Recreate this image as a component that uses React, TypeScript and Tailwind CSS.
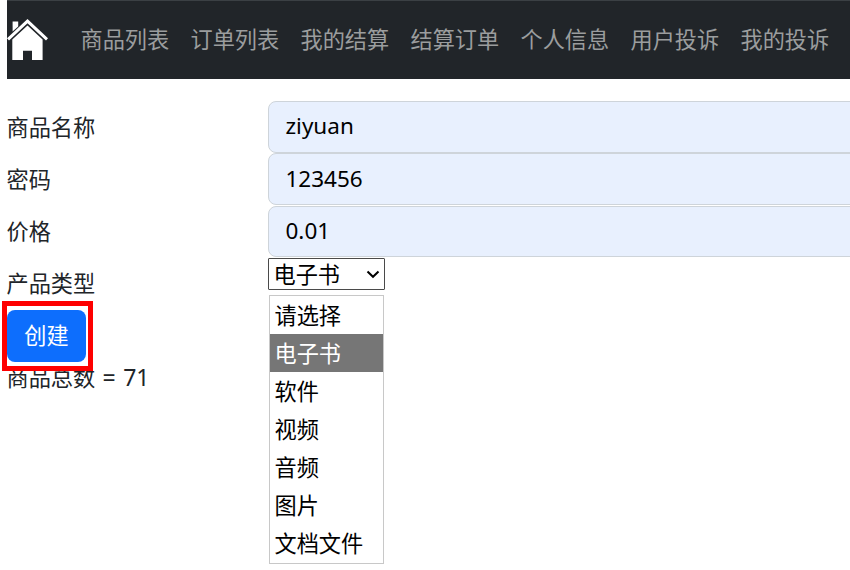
const navItems = ['商品列表', '订单列表', '我的结算', '结算订单', '个人信息', '用户投诉', '我的投诉'];
const options = ['请选择', '电子书', '软件', '视频', '音频', '图片', '文档文件'];
const fields = [
  { label: '商品名称', value: 'ziyuan', box: 'h-[52px] pt-[8px]' },
  { label: '密码', value: '123456', box: 'h-[52px] pt-[9px]' },
  { label: '价格', value: '0.01', box: 'mt-px h-[51px] pt-[8px]' },
];

function HomeIcon() {
  return (
    <svg className="mb-px block h-[41px] w-[41px] shrink-0" viewBox="0 0 41 41" fill="#fff" aria-hidden="true">
      <path d="M5.6 2.6H11.2V7.4L5.6 12.6Z" />
      <path d="M0 19.3L20.5 0L41 19.3L39 21.5L20.5 4.2L2 21.5Z" />
      <path d="M5.3 20.6L20.5 6.6L35.6 20.6V41H25V31.7H16V41H5.3Z" />
    </svg>
  );
}

function Navbar() {
  return (
    <nav className="ml-[7px] flex h-[79px] items-center border-t border-[#3b4044] bg-[#212529]">
      <HomeIcon />
      <ul className="mb-[4px] ml-[32.5px] flex gap-[22px]">
        {navItems.map((item) => (
          <li key={item} className="w-[88px] whitespace-nowrap text-[22.2px] text-[#9b9d9e]">{item}</li>
        ))}
      </ul>
    </nav>
  );
}

export default function App() {
  return (
    <div className="h-[570px] w-[850px] overflow-hidden bg-white font-['Noto_Sans_CJK_SC',sans-serif] text-[22.2px] leading-[32px] text-[#212529]">
      <Navbar />
      <main className="ml-[6.5px] mt-[22px]">
        {fields.map((field) => (
          <div key={field.label} className="flex">
            <label className="w-[261.5px] shrink-0 pt-[9px]">{field.label}</label>
            <div className={`${field.box} w-[600px] shrink-0 rounded-[8px] border border-[#ced4da] bg-[#e8f0fe] pl-[16.5px] font-['Noto_Sans',sans-serif] text-[22.5px] text-black`}>
              {field.value}
            </div>
          </div>
        ))}
        <div className="flex h-[53px]">
          <div className="w-[261.5px] shrink-0 pt-[9px]">产品类型</div>
          <div className="relative mt-px h-[32px] w-[117px]">
            <div className="flex h-full items-center justify-between rounded-[1px] border border-[#4a4a4a] bg-white pl-[4.5px] pr-[4px] text-black">
              <span className="pb-[3px]">电子书</span>
              <svg className="h-[14px] w-[14px]" viewBox="0 0 14 14" fill="none" stroke="#000" strokeWidth="2" aria-hidden="true">
                <path d="M1.5 4.5L7 9.8L12.5 4.5" />
              </svg>
            </div>
            <ul className="absolute left-px top-[37px] w-[115px] border border-[#c8c8c8] bg-white pb-px text-black">
              {options.map((option) => (
                <li
                  key={option}
                  className={`h-[38px] pl-[4.5px] pt-[2px] ${option === '电子书' ? 'bg-[#767676] text-white' : ''}`}
                >
                  {option}
                </li>
              ))}
            </ul>
          </div>
        </div>
        <div className="relative ml-[0.5px] h-[52px] w-[79px]">
          <button className="block h-full w-full rounded-[8px] bg-[#0d6efd] pb-[4px] text-white">创建</button>
          <div className="absolute -left-[5px] -top-[9px] h-[70px] w-[91px] border-[5px] border-[#fe0000]" />
        </div>
        <p className="-mt-[2px] flex">
          <span className="w-[96px]">商品总数</span>
          <span className="pt-px font-['Noto_Sans',sans-serif] text-[23px] [word-spacing:1.5px]">= 71</span>
        </p>
      </main>
    </div>
  );
}
